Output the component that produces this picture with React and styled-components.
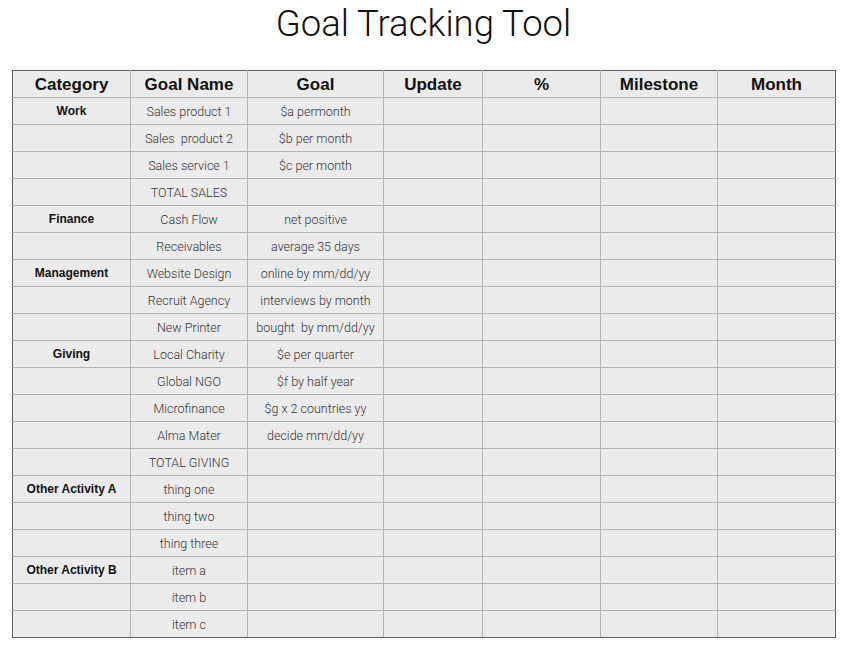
import React from "react";
import styled, { createGlobalStyle } from "styled-components";

const Global = createGlobalStyle`
  html, body { margin: 0; padding: 0; background: #ffffff; }
  body { font-family: "Liberation Sans", Arial, sans-serif; }
`;

const Page = styled.div`
  width: 845px;
  height: 650px;
  padding: 0 0 0 12px;
  box-sizing: border-box;
`;

const Title = styled.h1`
  margin: 0;
  padding: 2px 0 0 0;
  height: 68px;
  width: 823px;
  text-align: center;
  font-family: Roboto, "Liberation Sans", sans-serif;
  font-weight: 300;
  font-size: 36.5px;
  line-height: 44px;
  color: #111;
`;

const Table = styled.table`
  border-collapse: collapse;
  table-layout: fixed;
  width: 823px;
  border: 1px solid #5f5f5f;
  background: #ebebeb;

  tr > *:first-child { border-left-color: #5f5f5f; }
  tr > *:last-child { border-right-color: #5f5f5f; }
  thead th { border-top-color: #5f5f5f; }
  tbody tr:last-child td { border-bottom-color: #5f5f5f; }
`;

const Row = styled.tr`
  height: 27px;
`;

const HeadCell = styled.th`
  padding: 2px 0 0 0;
  border: 1px solid #b2b2b2;
  font-family: "Liberation Sans", Arial, sans-serif;
  font-weight: 700;
  font-size: 17px;
  color: #111;
  text-align: center;
  vertical-align: middle;
`;

const Cell = styled.td`
  padding: 0;
  border: 1px solid #b2b2b2;
  text-align: center;
  vertical-align: middle;
  white-space: pre;
  font-family: ${(p) => (p.$bold ? '"Liberation Sans", Arial, sans-serif' : 'Roboto, "Liberation Sans", sans-serif')};
  font-weight: ${(p) => (p.$bold ? 700 : 300)};
  font-size: ${(p) => (p.$bold ? "12px" : "12.5px")};
  color: ${(p) => (p.$bold ? "#111" : "#333")};
`;

const widths = [118, 117, 136, 99, 118, 117, 118];
const headers = ["Category", "Goal Name", "Goal", "Update", "%", "Milestone", "Month"];

const rows = [
  ["Work", "Sales product 1", "$a permonth"],
  ["", "Sales  product 2", "$b per month"],
  ["", "Sales service 1", "$c per month"],
  ["", "TOTAL SALES", ""],
  ["Finance", "Cash Flow", "net positive"],
  ["", "Receivables", "average 35 days"],
  ["Management", "Website Design", "online by mm/dd/yy"],
  ["", "Recruit Agency", "interviews by month"],
  ["", "New Printer", "bought  by mm/dd/yy"],
  ["Giving", "Local Charity", "$e per quarter"],
  ["", "Global NGO", "$f by half year"],
  ["", "Microfinance", "$g x 2 countries yy"],
  ["", "Alma Mater", "decide mm/dd/yy"],
  ["", "TOTAL GIVING", ""],
  ["Other Activity A", "thing one", ""],
  ["", "thing two", ""],
  ["", "thing three", ""],
  ["Other Activity B", "item a", ""],
  ["", "item b", ""],
  ["", "item c", ""],
];

export default function App() {
  return (
    <Page>
      <Global />
      <Title>Goal Tracking Tool</Title>
      <Table>
        <colgroup>
          {widths.map((w, i) => (
            <col key={i} style={{ width: w }} />
          ))}
        </colgroup>
        <thead>
          <Row>
            {headers.map((h) => (
              <HeadCell key={h}>{h}</HeadCell>
            ))}
          </Row>
        </thead>
        <tbody>
          {rows.map((r, i) => (
            <Row key={i}>
              <Cell $bold>{r[0]}</Cell>
              <Cell>{r[1]}</Cell>
              <Cell>{r[2]}</Cell>
              <Cell />
              <Cell />
              <Cell />
              <Cell />
            </Row>
          ))}
        </tbody>
      </Table>
    </Page>
  );
}
